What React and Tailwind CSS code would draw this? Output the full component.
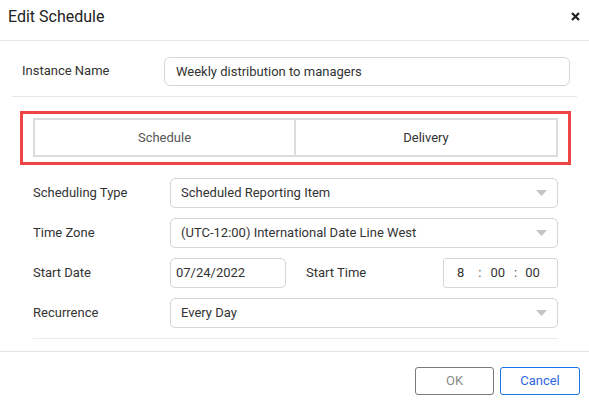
import React from "react";

const Caret = () => (
  <svg width="11" height="6" viewBox="0 0 11 6" className="shrink-0">
    <path d="M0 0 L11 0 L5.5 6 Z" fill="#c4c4c4" />
  </svg>
);

const SelectBox = ({ value }) => (
  <div className="flex-1 h-[30px] border border-[#d6d6d6] rounded-[5px] flex items-center justify-between pl-[10px] pr-[10px] text-[13px] text-[#333]">
    <span>{value}</span>
    <Caret />
  </div>
);

const Row = ({ label, children }) => (
  <div className="flex items-center h-[30px]">
    <div className="w-[137px] shrink-0 text-[13px] text-[#333]">{label}</div>
    {children}
  </div>
);

const App = () => {
  return (
    <div
      className="w-[589px] h-[406px] bg-white overflow-hidden"
      style={{ fontFamily: "Roboto, 'Liberation Sans', sans-serif" }}
    >
      {/* header */}
      <div className="h-[41px] border-b border-[#e6e6e6] flex items-center justify-between pl-[8px] pr-[9px]">
        <div className="text-[16px] text-[#222] pb-[6px]">Edit Schedule</div>
        <svg width="9" height="9" viewBox="0 0 9 9" className="mb-[7px]">
          <path d="M1 1 L8 8 M8 1 L1 8" stroke="#222" strokeWidth="2.2" />
        </svg>
      </div>

      {/* instance name */}
      <div className="flex items-center mt-[16px]">
        <div className="w-[164px] shrink-0 pl-[22px] pb-[2px] text-[13px] text-[#333]">
          Instance Name
        </div>
        <div className="flex-1 mr-[19px] h-[29px] border border-[#d6d6d6] rounded-[6px] flex items-center pl-[11px] text-[13px] text-[#333]">
          Weekly distribution to managers
        </div>
      </div>
      <div className="mx-[12px] mt-[10px] border-t border-[#e8e8e8]"></div>

      {/* tabs */}
      <div className="ml-[20px] mr-[18px] mt-[14px] h-[54px] border-[3px] border-[#f04444] pt-[4px] pb-[5px] pl-[10px] pr-[10px] flex">
        <div className="flex-1 flex border-2 border-[#dcdcdc]">
          <div className="w-[261px] border-r-2 border-[#dcdcdc] flex items-center justify-center text-[13px] text-[#555]">
            Schedule
          </div>
          <div className="flex-1 flex items-center justify-center text-[13px] text-[#333]">
            Delivery
          </div>
        </div>
      </div>

      {/* form */}
      <div className="ml-[33px] mr-[31px] mt-[13px] flex flex-col gap-[10px]">
        <Row label="Scheduling Type">
          <SelectBox value="Scheduled Reporting Item" />
        </Row>
        <Row label="Time Zone">
          <SelectBox value="(UTC-12:00) International Date Line West" />
        </Row>
        <Row label="Start Date">
          <div className="w-[116px] h-[30px] border border-[#d6d6d6] rounded-[5px] flex items-center pl-[5px] text-[13px] text-[#333]">
            07/24/2022
          </div>
          <div className="ml-[20px] text-[13px] text-[#333]">Start Time</div>
          <div className="ml-auto w-[115px] h-[30px] border border-[#d6d6d6] rounded-[3px] flex items-center text-[13px] text-[#333]">
            <span className="ml-[13px]">8</span>
            <span className="ml-[14px] text-[#555]">:</span>
            <span className="ml-[9px]">00</span>
            <span className="ml-[9px] text-[#555]">:</span>
            <span className="ml-[8px]">00</span>
          </div>
        </Row>
        <Row label="Recurrence">
          <SelectBox value="Every Day" />
        </Row>
      </div>
      <div className="ml-[33px] mr-[31px] mt-[10px] border-t border-[#ebebeb]"></div>

      {/* footer */}
      <div className="mt-[12px] border-t border-[#e3e3e3]"></div>
      <div className="flex justify-end gap-[6px] pr-[9px] mt-[15px]">
        <button className="w-[79px] h-[28px] border border-[#7a7a7a] rounded-[3px] text-[13px] text-[#8a8a8a] bg-white">
          OK
        </button>
        <button className="w-[80px] h-[28px] border border-[#1a73e8] rounded-[3px] text-[13px] text-[#3166e0] bg-white">
          Cancel
        </button>
      </div>
    </div>
  );
};

export default App;
